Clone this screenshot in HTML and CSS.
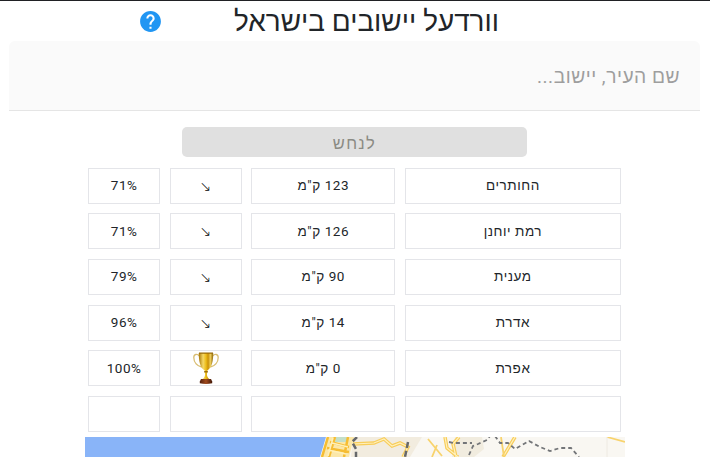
FILE: index.html
```html
<!DOCTYPE html>
<html lang="he" dir="rtl">
<head>
<meta charset="utf-8">
<title>וורדעל יישובים בישראל</title>
<link rel="stylesheet" href="styles.css">
</head>
<body>
<header class="header">
  <h1 class="title">וורדעל יישובים בישראל</h1>
  <button class="help" aria-label="עזרה">
    <svg viewBox="0 0 24 24" width="25" height="25"><path fill="#fff" d="M7 5h10v15H7z"/><path fill="#2196f3" d="M12 2C6.48 2 2 6.48 2 12s4.48 10 10 10 10-4.480 10-10S17.520 2 12 2zm1 17h-2v-2h2v2zm2.070-7.750l-.9.920C13.450 12.900 13 13.500 13 15h-2v-.5c0-1.100.45-2.100 1.170-2.830l1.240-1.260c.37-.36.59-.86.59-1.410 0-1.100-.9-2-2-2s-2 .9-2 2H8c0-2.210 1.790-4 4-4s4 1.790 4 4c0 .88-.36 1.680-.93 2.250z"/></svg>
  </button>
</header>
<input class="search" type="text" placeholder="שם העיר, יישוב...">
<button class="guess" disabled>לנחש</button>
<main class="board">
  <div class="cell">החותרים</div><div class="cell">123 ק"מ</div><div class="cell arrow">↘</div><div class="cell" dir="ltr">71%</div>
  <div class="cell">רמת יוחנן</div><div class="cell">126 ק"מ</div><div class="cell arrow">↘</div><div class="cell" dir="ltr">71%</div>
  <div class="cell">מענית</div><div class="cell">90 ק"מ</div><div class="cell arrow">↘</div><div class="cell" dir="ltr">79%</div>
  <div class="cell">אדרת</div><div class="cell">14 ק"מ</div><div class="cell arrow">↘</div><div class="cell" dir="ltr">96%</div>
  <div class="cell">אפרת</div><div class="cell">0 ק"מ</div>
  <div class="cell prize">
    <svg class="trophy" viewBox="0 0 26 32" width="26" height="32">
      <defs>
        <linearGradient id="gold"><stop offset="0" stop-color="#a87808"/><stop offset=".3" stop-color="#f5d868"/><stop offset=".5" stop-color="#edbd18"/><stop offset=".65" stop-color="#c99008"/><stop offset=".8" stop-color="#f0cf5c"/><stop offset="1" stop-color="#8c6508"/></linearGradient>
        <linearGradient id="base"><stop offset="0" stop-color="#52200c"/><stop offset=".5" stop-color="#a04a1c"/><stop offset="1" stop-color="#421808"/></linearGradient>
      </defs>
      <path fill="none" stroke="#d8bd72" stroke-width="1.300" d="M6.500 4C4 1.500.8 2 .8 5.500c0 5 3.500 8.500 8 9.500M19.500 4C22 1.500 25.200 2 25.200 5.500c0 5-3.500 8.500-8 9.500"/>
      <path fill="url(#gold)" d="M5.800 1h14.400c.2 7-1.200 15-5.900 17.500v1.500l-.4 2c0 3 1.300 4.500 3.600 5.500h-9c2.300-1 3.600-2.500 3.600-5.500l-.4-2v-1.500C7 16 5.600 8 5.800 1z"/>
      <path fill="#9a6c0b" d="M6 .5h14v1.200H6zM11.200 19h3.600v1.500h-3.600z"/>
      <path fill="url(#base)" d="M8 27h10l1.200 2.500v1.800q-6.200 1.400-12.400 0v-1.800z"/>
    </svg>
  </div>
  <div class="cell" dir="ltr">100%</div>
  <div class="cell"></div><div class="cell"></div><div class="cell"></div><div class="cell"></div>
</main>
<div class="map">
  <svg viewBox="0 0 540 20" width="540" height="20">
    <path fill="#89b4f8" d="M0 0h540v20H0z"/>
    <path fill="#f9f7f2" d="M241 0h299v20H235z"/>
    <path fill="#f2ecdf" d="M268 0h69l-12 20h-59z"/>
    <path fill="#f1ecdf" d="M370 0h27l2 12-10 8h-22z"/>
    <path fill="#fbe7a9" d="M242 0h27l-5 20h-28z"/>
    <path fill="#c4dfc9" d="M251 0h13l-3 5h-11z"/>
    <path fill="none" stroke="#f6bd32" stroke-width="2.500" d="M243 0l-6 20M250 0l-6 20M245 5l19 5M242 11l22 4M263 0l-4 20"/>
    <path fill="none" stroke="#fff0b8" stroke-width="1.500" d="M248 1l-5 18M247 6l16 4M243 13l18 4"/>
    <g fill="none" stroke="#f8cd59" stroke-width="3.500"><path d="M268 7l21-1 10-4 8 7 8-3 8 4-5 10M374 0l-6 7 3 13M360 0l2 11 11 9M430 0l-12 20"/></g>
    <g fill="none" stroke="#fff0bd" stroke-width="1.200"><path d="M268 7l21-1 10-4 8 7 8-3 8 4-5 10M374 0l-6 7 3 13M360 0l2 11 11 9M430 0l-12 20"/></g>
    <path fill="none" stroke="#f8d36d" stroke-width="1.800" d="M343 2l14 17M352 8l-5 12M416 0l3 20M522 0l18 5"/>
    <path fill="none" stroke="#66686b" stroke-width="2.500" stroke-dasharray="6 3" d="M272 0l-5 5 4 7v8M323 5l-3 15"/>
    <path fill="none" stroke="#737578" stroke-width="1.800" stroke-dasharray="4 3" d="M364 5l5 1h18M384 18l4-9 5-2 9-4 3-4 5 0 5 7h8l7 6 14-8 11 6 10 4 10-3h11l8 9"/>
    <path stroke="#eeeae2" d="M522 0v20"/>
  </svg>
</div>
</body>
</html>
```
FILE: styles.css
```css
* { box-sizing: border-box; }
html {
  border-top: 1px solid #202124;
  background: #fff;
}
body {
  margin: 0;
  height: 456px;
  overflow: hidden;
  padding-right: 1px;
  color: #212529;
  font-family: Roboto, "Liberation Sans", sans-serif;
  display: flex;
  flex-direction: column;
  align-items: center;
}
.header {
  width: 691px;
  height: 40px;
  flex: none;
  display: flex;
  align-items: center;
  padding-right: 201px;
}
.title {
  width: 265px;
  margin: 0;
  padding-top: 2px;
  font-size: 27.900px;
  font-weight: 400;
  line-height: 40px;
  white-space: nowrap;
}
.help {
  display: flex;
  margin-right: 71px;
  padding: 0;
  border: 0;
  background: none;
}
.search {
  width: 691px;
  height: 70px;
  flex: none;
  padding: 1px 20px 0;
  border: 0;
  border-bottom: 1px solid #e5e5e5;
  border-radius: 6px 6px 0 0;
  background: #fafafa;
  font: 19.200px Roboto, "Liberation Sans", sans-serif;
  letter-spacing: .5px;
}
.search::placeholder { color: #9e9e9e; }
.guess {
  width: 345px;
  height: 30px;
  flex: none;
  margin: 16px 0 10.800px;
  padding: 2px 0 0;
  border: 0;
  border-radius: 5px;
  background: #e0e0e0;
  color: #8b8b84;
  font: 16.500px Roboto, "Liberation Sans", sans-serif;
  letter-spacing: 1.300px;
}
.board {
  flex: none;
  display: grid;
  grid-template-columns: 216px 144px 72px 72px;
  grid-auto-rows: 36px;
  gap: 9.600px;
}
.cell {
  display: flex;
  align-items: center;
  justify-content: center;
  padding-bottom: 1px;
  border: 1px solid #e4e5e9;
  font-size: 13.500px;
  letter-spacing: .55px;
  white-space: pre;
}
.arrow {
  padding-bottom: 0;
  color: #000;
  font-family: "DejaVu Sans Light", "DejaVu Sans", sans-serif;
  font-size: 14px;
  font-weight: 200;
}
.prize { padding: 0; }
.map {
  width: 540px;
  height: 20px;
  flex: none;
  margin-top: 5.200px;
  direction: ltr;
}
.map svg { display: block; }
```
